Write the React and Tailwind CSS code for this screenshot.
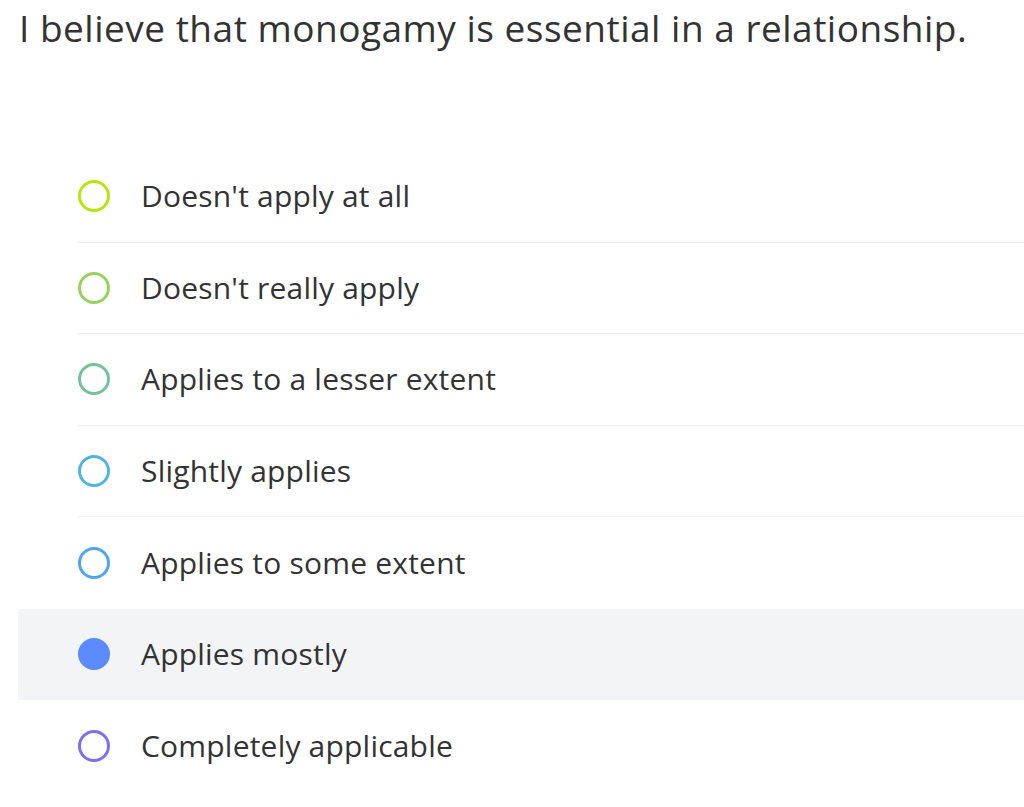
import React from "react";

const options = [
  { label: "Doesn't apply at all", color: "border-[#b8e40f]" },
  { label: "Doesn't really apply", color: "border-[#95d35f]" },
  { label: "Applies to a lesser extent", color: "border-[#72c39a]" },
  { label: "Slightly applies", color: "border-[#4fb5dd]" },
  { label: "Applies to some extent", color: "border-[#4ea5f8]" },
  { label: "Applies mostly", color: "border-[#5b8bff]", selected: true },
  { label: "Completely applicable", color: "border-[#7d6ff0]" },
];

export default function App() {
  return (
    <div className="min-h-[807px] bg-white text-[#333] pl-[18px] overflow-hidden" style={{ fontFamily: '"Open Sans", sans-serif' }}>
      <h1 className="text-[37px] leading-[50px] tracking-[0.5px] pt-[3px] pl-[1px] font-normal whitespace-nowrap">
        I believe that monogamy is essential in a relationship.
      </h1>
      <div className="mt-[98px]">
        {options.map((o, i) => (
          <div key={i} className={`pl-[60px] ${o.selected ? "bg-[#f3f4f6]" : ""}`}>
            <div className={`flex items-center h-[91.5px] ${i < options.length - 1 && !o.selected && !options[i + 1]?.selected ? "border-b border-[#efefef]" : ""}`}>
              <span
                className={`w-[32px] h-[32px] rounded-full border-[3px] ${o.color} ${o.selected ? "bg-[#5b8bff]" : ""} shrink-0`}
              />
              <span className="ml-[31px] text-[30px] tracking-[0.2px] leading-none">{o.label}</span>
            </div>
          </div>
        ))}
      </div>
    </div>
  );
}
